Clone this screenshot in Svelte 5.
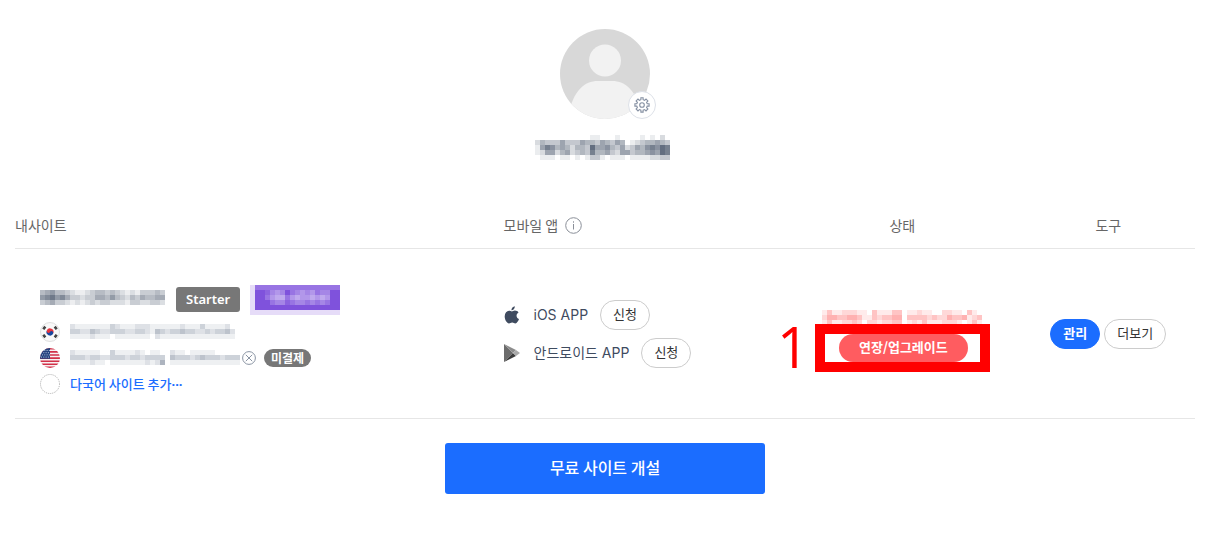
<script lang="ts">
  type Site = {
    id: string;
    mask: string[];
    unpaid: boolean;
  };

  type App = {
    id: 'ios' | 'android';
    name: string;
  };

  /** Censored text: one digit per 5px block, 0 = empty, 9 = darkest */
  const nameMask = [
    '0000000000011000100001010200',
    '2433353335443543540123445430',
    '1576454244385564352354676870',
    '1255245234374453255344565870',
    '0111011010133101110111122330',
  ];
  const titleMask = [
    '4564432112344343212133343',
    '6786753323355464324354455',
    '3453321212323322213322332',
    '0000000000000000000000000',
  ];
  const statusMask = [
    '13112221103111330112110022110310',
    '24433443113233440333323224334123',
    '13112232022122330121311122210131',
  ];
  const planMask = [
    '22222222222222222',
    '00134302343423300',
    '00245524544545400',
    '00023312332323200',
    '00000000000000000',
  ];

  const sites: Site[] = [
    {
      id: 'ko',
      mask: [
        '211111113211122211111121113111120',
        '332243223332233214323343322323342',
        '111121110111111102111111111111111',
      ],
      unpaid: false,
    },
    {
      id: 'en',
      mask: [
        '2111110031111210110021101111100000',
        '3332332233323323333043332343332333',
        '1111211011111112125011111111111111',
      ],
      unpaid: true,
    },
  ];

  const apps: App[] = [
    { id: 'ios', name: 'iOS APP' },
    { id: 'android', name: '안드로이드 APP' },
  ];
</script>

{#snippet mosaic(rows: string[], color: string)}
  <svg
    class="mosaic"
    width={rows[0].length * 5}
    height={rows.length * 5}
    fill={color}
    shape-rendering="crispEdges"
    aria-hidden="true"
  >
    {#each rows as row, y}
      {#each row as level, x}
        {#if level !== '0'}
          <rect x={x * 5} y={y * 5} width="5" height="5" opacity={Number(level) / 10} />
        {/if}
      {/each}
    {/each}
  </svg>
{/snippet}

{#snippet flag(id: string)}
  {#if id === 'ko'}
    <svg class="flag" width="20" height="20" viewBox="0 0 20 20" aria-hidden="true">
      <circle cx="10" cy="10" r="9.5" fill="#f8f8f8" stroke="#dedede" />
      <g transform="rotate(25 10 10)">
        <path d="M6.5 10a3.5 3.5 0 0 1 7 0z" fill="#e5333f" />
        <path d="M6.5 10a3.5 3.5 0 0 0 7 0z" fill="#17479e" />
        <circle cx="8.3" cy="10" r="1.7" fill="#e5333f" />
        <circle cx="11.7" cy="10" r="1.7" fill="#17479e" />
      </g>
      <g stroke="#444" stroke-width="2.6">
        <path d="M3.3 7.2l2-2.6M14.7 4.6l2 2.6M3.3 12.8l2 2.6M14.7 15.4l2-2.6" />
      </g>
    </svg>
  {:else}
    <svg class="flag" width="20" height="20" viewBox="0 0 20 20" aria-hidden="true">
      <clipPath id="flag-round"><circle cx="10" cy="10" r="10" /></clipPath>
      <g clip-path="url(#flag-round)">
        <rect width="20" height="20" fill="#f7f0f1" />
        <path
          d="M0 .8h20M0 3.9h20M0 7h20M0 10.1h20M0 13.2h20M0 16.3h20M0 19.4h20"
          stroke="#d22f48"
          stroke-width="1.6"
        />
        <rect width="10" height="10.8" fill="#25427f" />
        <path
          d="M2 2.5h8M1 4.7h9M2 6.9h8M1 9.1h9"
          stroke="#b9c5dd"
          stroke-width="1"
          stroke-dasharray="1 1.3"
        />
      </g>
    </svg>
  {/if}
{/snippet}

<main>
  <section class="profile">
    <div class="avatar">
      <svg width="90" height="90" viewBox="0 0 90 90" aria-hidden="true">
        <clipPath id="avatar-round"><circle cx="45" cy="45" r="45" /></clipPath>
        <g clip-path="url(#avatar-round)">
          <rect width="90" height="90" fill="#d8d8d8" />
          <circle cx="45" cy="31.5" r="16" fill="#f2f2f2" />
          <path d="M10 90V79C15 62 24 52 38 52H52C66 52 75 62 80 79V90z" fill="#f2f2f2" />
        </g>
      </svg>
      <button type="button" class="settings" aria-label="프로필 설정">
        <svg width="16" height="16" viewBox="0 0 16 16" fill="none" stroke="#8590a2" stroke-width="1.1">
          <path
            d="M6.9.8h2.2v1.9l1.500.6 1.400-1.300 1.900 1.900-1.300 1.400.6 1.500h1.900v2.300h-1.900l-.6 1.500 1.300 1.400-1.900 1.900-1.400-1.300-1.500.6v1.900H6.900v-1.900l-1.500-.6L4 13.900 2.100 12l1.300-1.400-.6-1.500H.9V6.800h1.900l.6-1.500L2.100 3.900 4 2l1.400 1.300 1.500-.6z"
          />
          <circle cx="8" cy="8" r="2.3" />
        </svg>
      </button>
    </div>
    {@render mosaic(nameMask, '#3c4a60')}
  </section>

  <table>
    <thead>
      <tr>
        <th class="col-site">내사이트</th>
        <th class="col-app">
          <span class="with-info">
            모바일 앱
            <svg width="17" height="17" viewBox="0 0 17 17" fill="none" stroke="#8a8f98" aria-hidden="true">
              <circle cx="8.5" cy="8.5" r="7.8" />
              <path d="M8.5 7v5.5M8.5 4.300v1.400" />
            </svg>
          </span>
        </th>
        <th class="col-status">상태</th>
        <th class="col-tools">도구</th>
      </tr>
    </thead>
    <tbody>
      <tr>
        <td class="site">
          <div class="title">
            {@render mosaic(titleMask, '#4b586c')}
            <span class="plan">Starter</span>
            <span class="tag">{@render mosaic(planMask, '#ffffff')}</span>
          </div>
          <ul>
            {#each sites as site (site.id)}
              <li>
                {@render flag(site.id)}
                {@render mosaic(site.mask, '#5b6a80')}
                {#if site.unpaid}
                  <button type="button" class="remove" aria-label="삭제">
                    <svg width="14" height="14" viewBox="0 0 14 14" fill="none" stroke="#8a94a3">
                      <circle cx="7" cy="7" r="6.4" />
                      <path d="M3.800 3.800l6.400 6.400M10.200 3.800l-6.400 6.400" />
                    </svg>
                  </button>
                  <span class="unpaid">미결제</span>
                {/if}
              </li>
            {/each}
            <li>
              <svg class="flag" width="20" height="20" viewBox="0 0 20 20" aria-hidden="true">
                <circle cx="10" cy="10" r="9.5" fill="none" stroke="#aaa" stroke-dasharray="1 1" />
              </svg>
              <a href="#add">다국어 사이트 추가<span class="dots">···</span></a>
            </li>
          </ul>
        </td>
        <td>
          {#each apps as app (app.id)}
            <div class="app">
              {#if app.id === 'ios'}
                <svg width="16" height="18" viewBox="0 0 16 18" fill="#3f4b5f" aria-hidden="true">
                  <path
                    d="M10.800.2c.1 1.200-.3 2.200-1 3-.7.800-1.600 1.200-2.400 1.100-.1-1.100.4-2.100 1-2.800.7-.7 1.600-1.200 2.400-1.300zM7.900 5.400c.6 0 1.600-.8 3-.8 1.500 0 2.900.7 3.600 1.900-2.900 1.700-2.400 5.400.5 6.500-.6 1.800-2.100 4.300-3.600 4.400-1.300 0-1.700-.8-3.200-.8s-2 .8-3.200.8C3 17.300.6 13.600.7 10.200.8 6.900 2.800 4.800 5 4.700c1.200 0 2.200.7 2.900.7z"
                  />
                </svg>
              {:else}
                <svg width="16" height="18" viewBox="0 0 16 18" aria-hidden="true">
                  <path d="M0 0v18l9-9z" fill="#6c6c6c" />
                  <path d="M0 0l9 9 3-3z" fill="#8c8c8c" />
                  <path d="M0 18l9-9 3 3z" fill="#3c3c3c" />
                  <path d="M12 6L9 9l3 3 4-3z" fill="#aaa" />
                </svg>
              {/if}
              <span class="app-name">{app.name}</span>
              <button type="button" class="pill">신청</button>
            </div>
          {/each}
        </td>
        <td class="status">
          {@render mosaic(statusMask, '#ff3c3c')}
          <div class="upgrade">
            <button type="button">연장/업그레이드</button>
            <span class="marker">1</span>
          </div>
        </td>
        <td class="tools">
          <div>
            <button type="button" class="pill primary">관리</button>
            <button type="button" class="pill">더보기</button>
          </div>
        </td>
      </tr>
    </tbody>
  </table>

  <button type="button" class="create">무료 사이트 개설</button>
</main>

<style>
  :global(body) {
    margin: 0;
    background: #fff;
  }

  main {
    display: flex;
    flex-direction: column;
    align-items: center;
    padding: 29px 10px 52px 15px;
    color: #666;
    font-family: 'Noto Sans CJK KR', sans-serif;
    font-size: 13px;
    line-height: 20px;
  }

  svg {
    display: block;
    flex: none;
  }

  button {
    padding: 0;
    border: 0;
    font: inherit;
    cursor: pointer;
  }

  .profile {
    display: flex;
    flex-direction: column;
    align-items: center;
    gap: 16px;
  }

  .avatar {
    position: relative;
  }

  .settings {
    position: absolute;
    right: -6px;
    bottom: 0;
    display: grid;
    place-items: center;
    width: 28px;
    height: 28px;
    border: 1px solid #dde1e8;
    border-radius: 50%;
    background: #fff;
  }

  table {
    width: 100%;
    margin-top: 44px;
    border-collapse: collapse;
    table-layout: fixed;
  }

  tr {
    border-bottom: 1px solid #e6e6e6;
  }

  th {
    height: 42px;
    padding: 0 0 2px;
    font-size: 14px;
    font-weight: 400;
    text-align: left;
  }

  .col-site {
    width: 41.4%;
  }

  .col-app {
    width: 23.7%;
  }

  .col-status {
    width: 20.2%;
    text-align: center;
  }

  .col-tools {
    text-align: center;
  }

  .with-info {
    display: flex;
    align-items: center;
    gap: 7px;
  }

  td {
    height: 170px;
    padding: 0;
    vertical-align: middle;
    box-sizing: border-box;
  }

  td.site {
    padding: 14px 0 0 25px;
  }

  .title {
    display: flex;
    align-items: center;
    height: 30px;
  }

  .plan {
    margin: 0 10px 0 11px;
    padding: 2px 10px 3px;
    border-radius: 3px;
    background: #777;
    color: #fff;
    font-family: 'Noto Sans', sans-serif;
    font-weight: 600;
  }

  .tag {
    border: 5px solid #e6dcf8;
    border-width: 0 0 5px 5px;
    background: #7f52dc;
  }

  ul {
    margin: 4px 0 0;
    padding: 0;
    list-style: none;
  }

  li {
    display: flex;
    align-items: center;
    height: 26px;
  }

  .flag {
    margin-right: 10px;
  }

  .remove {
    margin: 0 8px 0 2px;
    background: none;
  }

  .unpaid {
    padding: 0 7px;
    border-radius: 9px;
    background: #777;
    color: #fff;
    font-size: 12px;
    font-weight: 700;
    line-height: 18px;
  }

  a {
    color: #1b6dff;
    font-weight: 500;
    text-decoration: none;
  }

  .dots {
    font-family: 'Noto Sans', sans-serif;
    font-weight: 700;
  }

  .app {
    display: flex;
    align-items: center;
  }

  .app + .app {
    margin-top: 8px;
  }

  .app-name {
    margin: 0 12px 0 14px;
    color: #3f4b5f;
    font-family: Inter, 'Noto Sans CJK KR', sans-serif;
    font-size: 14px;
  }

  .pill {
    height: 30px;
    padding: 0 12px 2px;
    border: 1px solid #ccc;
    border-radius: 15px;
    background: #fff;
    color: #333;
  }

  .pill.primary {
    border-color: #1b6dff;
    background: #1b6dff;
    color: #fff;
    font-weight: 700;
  }

  td.status {
    padding-top: 14px;
  }

  .status .mosaic {
    margin: 0 auto;
  }

  .upgrade {
    position: relative;
    width: max-content;
    margin: -1px auto 0;
    padding: 0 12px 0 14px;
    border: 10px solid #f00;
  }

  .upgrade button {
    display: block;
    height: 28px;
    padding: 0 20px 2px;
    border-radius: 14px;
    background: #ff5c60;
    color: #fff;
    font-weight: 700;
  }

  .marker {
    position: absolute;
    right: 100%;
    top: -10px;
    margin-right: 16px;
    color: #f00;
    font-family: 'Open Sans', sans-serif;
    font-size: 56px;
    font-weight: 500;
    line-height: 44px;
  }

  .tools div {
    display: flex;
    justify-content: center;
    gap: 4px;
  }

  .create {
    width: 320px;
    height: 51px;
    margin-top: 24px;
    padding-bottom: 4px;
    border-radius: 3px;
    background: #1b6dff;
    color: #fff;
    font-size: 16px;
    font-weight: 500;
  }
</style>
